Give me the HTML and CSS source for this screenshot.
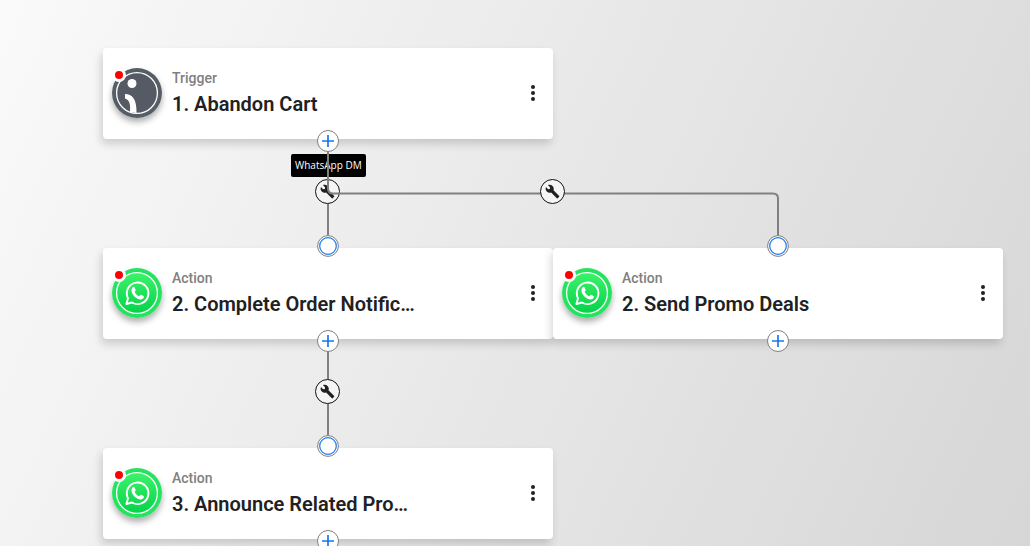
FILE: index.html
```
<!DOCTYPE html>
<html lang="en">
<head>
<meta charset="utf-8">
<title>Flow builder</title>
<link rel="stylesheet" href="styles.css">
</head>
<body>
<svg class="defs" aria-hidden="true">
  <defs>
    <linearGradient id="wa-green" x1="0" y1="0" x2="0" y2="1">
      <stop offset="0" stop-color="#3df26b"/>
      <stop offset="1" stop-color="#04d34a"/>
    </linearGradient>
    <symbol id="whatsapp" viewBox="0 0 50 50">
      <circle cx="25" cy="25" r="25" fill="#25e35f"/>
      <circle cx="25" cy="25" r="20.4" fill="url(#wa-green)" stroke="#fff" stroke-width="1.3"/>
      <path d="M14.4 36 L16 30.2 A10.8 10.8 0 1 1 20 34.5 Z" fill="none" stroke="#fff" stroke-width="1.9" stroke-linejoin="round"/>
      <path d="M20.7 19.3 c.5-.5 1.4-.5 1.8 0 l1.2 2.8 c.1.7-1 1.5-1 2 .9 1.9 2.4 3.3 4.3 4.1 .6.1 1.3-1.5 2-1.4 l2.7 1.3 c.5.4.1 1.9-.6 2.5 -2.5 2-6 .4-8.4-1.9 -2.3-2.3-4.7-6.3-2-9.4z" fill="#fff"/>
    </symbol>
    <symbol id="trigger" viewBox="0 0 50 50">
      <circle cx="25" cy="25" r="25" fill="#555d66"/>
      <circle cx="25" cy="25" r="20.4" fill="#555a64" stroke="#fff" stroke-width="1.3"/>
      <circle cx="20" cy="15.5" r="4.5" fill="#fff"/>
      <path d="M13 26 C20 26 25 31 24.5 45 L18 44 C18.5 37 18 32 13 30.5 Z" fill="#fff"/>
    </symbol>
    <symbol id="wrench" viewBox="0 0 24 24">
      <path d="M22.7 19l-9.1-9.1c.9-2.3.4-5-1.5-6.9-2-2-5-2.4-7.4-1.3L8 5 8 7.500 6.500 8.500 4.500 8 1.600 4.7C.4 7.1.9 10.1 2.9 12.1c1.9 1.9 4.6 2.4 6.9 1.5l9.1 9.1c.4.4 1 .4 1.4 0l2.3-2.3c.5-.4.5-1.1.1-1.4z"/>
    </symbol>
    <symbol id="dots" viewBox="0 0 24 24">
      <circle cx="12" cy="6" r="2"/><circle cx="12" cy="12" r="2"/><circle cx="12" cy="18" r="2"/>
    </symbol>
    <symbol id="plus" viewBox="0 0 12 12">
      <path d="M6 0V12M0 6H12" stroke="#1877f2" stroke-width="1.7"/>
    </symbol>
    <symbol id="inlet" viewBox="0 0 22 22">
      <circle cx="11" cy="11" r="10.4" fill="#fff" stroke="#808080"/>
      <circle cx="11" cy="11" r="8.3" fill="#fff" stroke="#1877f2" stroke-width="1.2"/>
    </symbol>
  </defs>
</svg>

<main class="canvas">
  <svg class="edges edges-back" aria-hidden="true">
    <path d="M328 141V246M328 341V446"/>
  </svg>
  <svg class="edges edges-front" aria-hidden="true">
    <path d="M328 141V188.5Q328 193.5 333 193.5H773Q778 193.5 778 198.5V246"/>
  </svg>

  <article class="node node-1">
    <div class="avatar"><svg class="logo" aria-hidden="true"><use href="#trigger"/></svg><span class="status"></span></div>
    <div class="info"><p class="kind">Trigger</p><h2 class="title">1. Abandon Cart</h2></div>
    <button class="menu" aria-label="Step options"><svg aria-hidden="true"><use href="#dots"/></svg></button>
    <button class="port port-out" aria-label="Add step"><svg aria-hidden="true"><use href="#plus"/></svg></button>
  </article>

  <article class="node node-2">
    <div class="avatar"><svg class="logo" aria-hidden="true"><use href="#whatsapp"/></svg><span class="status"></span></div>
    <div class="info"><p class="kind">Action</p><h2 class="title">2. Complete Order Notific…</h2></div>
    <button class="menu" aria-label="Step options"><svg aria-hidden="true"><use href="#dots"/></svg></button>
    <svg class="port port-in" aria-hidden="true"><use href="#inlet"/></svg>
    <button class="port port-out" aria-label="Add step"><svg aria-hidden="true"><use href="#plus"/></svg></button>
  </article>

  <article class="node node-3">
    <div class="avatar"><svg class="logo" aria-hidden="true"><use href="#whatsapp"/></svg><span class="status"></span></div>
    <div class="info"><p class="kind">Action</p><h2 class="title">2. Send Promo Deals</h2></div>
    <button class="menu" aria-label="Step options"><svg aria-hidden="true"><use href="#dots"/></svg></button>
    <svg class="port port-in" aria-hidden="true"><use href="#inlet"/></svg>
    <button class="port port-out" aria-label="Add step"><svg aria-hidden="true"><use href="#plus"/></svg></button>
  </article>

  <article class="node node-4">
    <div class="avatar"><svg class="logo" aria-hidden="true"><use href="#whatsapp"/></svg><span class="status"></span></div>
    <div class="info"><p class="kind">Action</p><h2 class="title">3. Announce Related Pro…</h2></div>
    <button class="menu" aria-label="Step options"><svg aria-hidden="true"><use href="#dots"/></svg></button>
    <svg class="port port-in" aria-hidden="true"><use href="#inlet"/></svg>
    <button class="port port-out" aria-label="Add step"><svg aria-hidden="true"><use href="#plus"/></svg></button>
  </article>

  <button class="tool tool-1" aria-label="Edit condition" aria-describedby="tip"><svg aria-hidden="true"><use href="#wrench"/></svg></button>
  <span class="tooltip" id="tip" role="tooltip">WhatsApp DM</span>
  <button class="tool tool-2" aria-label="Edit condition"><svg aria-hidden="true"><use href="#wrench"/></svg></button>
  <button class="tool tool-3" aria-label="Edit condition"><svg aria-hidden="true"><use href="#wrench"/></svg></button>
</main>
</body>
</html>
```
FILE: styles.css
```
* {
  box-sizing: border-box;
}

body {
  margin: 0;
  font-family: Roboto, sans-serif;
  color: #212121;
}

button {
  padding: 0;
  font: inherit;
  color: inherit;
  cursor: pointer;
}

.defs {
  position: absolute;
  width: 0;
  height: 0;
}

.canvas {
  position: relative;
  height: 100vh;
  overflow: hidden;
  background: linear-gradient(115deg, #fafafa, #d6d6d6);
}

.edges {
  position: absolute;
  inset: 0;
  width: 100%;
  height: 100%;
  fill: none;
  stroke: #808080;
  stroke-width: 2;
  pointer-events: none;
}

.edges-back {
  z-index: 1;
}

.edges-front {
  z-index: 3;
}

.node {
  position: absolute;
  display: flex;
  align-items: center;
  gap: 10px;
  width: 450px;
  padding: 19px 8px 20px 9px;
  border-radius: 4px;
  background: #fff;
  box-shadow: -2px 5px 8px rgba(0, 0, 0, 0.16);
}

.node-1 {
  left: 103px;
  top: 48px;
}

.node-2 {
  left: 103px;
  top: 248px;
}

.node-3 {
  left: 553px;
  top: 248px;
}

.node-4 {
  left: 103px;
  top: 448px;
}

.avatar {
  position: relative;
  flex: none;
  width: 50px;
  height: 50px;
  border-radius: 50%;
  box-shadow: 0 4px 6px rgba(0, 0, 0, 0.32);
}

.logo {
  display: block;
  width: 50px;
  height: 50px;
}

.status {
  position: absolute;
  left: 0;
  top: 0;
  width: 14px;
  height: 14px;
  border: 3px solid #fff;
  border-radius: 50%;
  background: #f00;
}

.info {
  flex: 1;
  min-width: 0;
}

.kind {
  margin: 0;
  font-size: 14px;
  font-weight: 500;
  line-height: 22px;
  color: #808080;
}

.title {
  margin: 0;
  font-size: 20px;
  font-weight: 600;
  line-height: 30px;
  overflow: hidden;
  text-overflow: ellipsis;
  white-space: nowrap;
}

.menu {
  display: flex;
  border: 0;
  background: none;
}

.menu svg {
  width: 24px;
  height: 24px;
  fill: currentColor;
}

.port {
  position: absolute;
  z-index: 4;
  left: 50%;
  width: 22px;
  height: 22px;
  margin-left: -11px;
}

.port-out {
  bottom: -13px;
  display: grid;
  place-items: center;
  border: 1px solid #808080;
  border-radius: 50%;
  background: #fff;
}

.port-out svg {
  width: 12px;
  height: 12px;
}

.port-in {
  top: -13px;
}

.tool {
  position: absolute;
  z-index: 2;
  display: grid;
  place-items: center;
  width: 25px;
  height: 25px;
  border: 1px solid #111;
  border-radius: 50%;
  background: #f5f5f5;
}

.tool svg {
  width: 15px;
  height: 15px;
  fill: #212121;
}

.tool-1 {
  left: 315px;
  top: 179px;
}

.tool-2 {
  left: 540px;
  top: 179px;
  z-index: 4;
}

.tool-3 {
  left: 315px;
  top: 379px;
}

.tooltip {
  position: absolute;
  z-index: 2;
  left: 291px;
  top: 154px;
  padding: 4px;
  border-radius: 2px;
  background: #000;
  color: #fff;
  font-family: "Open Sans", sans-serif;
  font-size: 10px;
  line-height: 15px;
  white-space: nowrap;
}
```
